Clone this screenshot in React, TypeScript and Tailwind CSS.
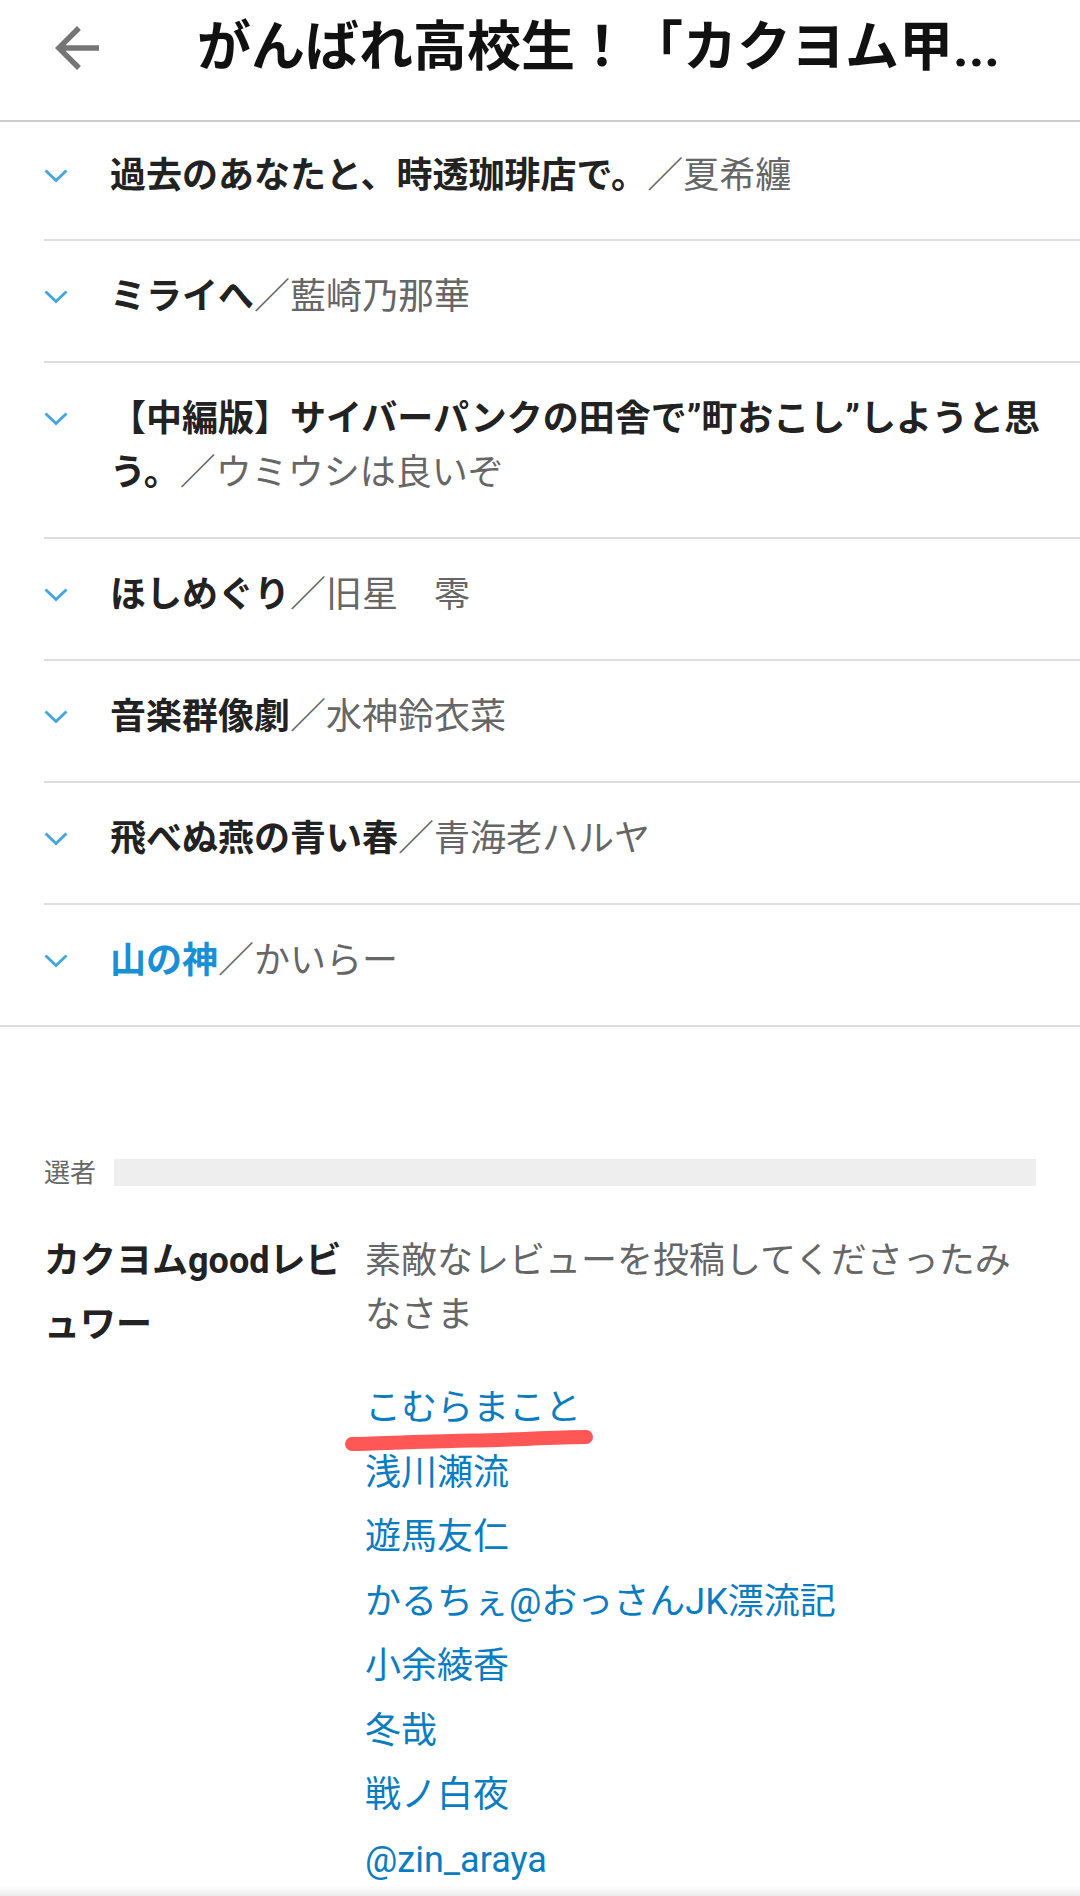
import React from 'react'

// works in the list; the last one is the highlighted (blue) title
const works = [
  { title: "過去のあなたと、時透珈琲店で。", author: "夏希纏" },
  { title: "ミライへ", author: "藍崎乃那華" },
  { title: "【中編版】サイバーパンクの田舎で”町おこし”しようと思う。", author: "ウミウシは良いぞ" },
  { title: "ほしめぐり", author: "旧星　零" },
  { title: "音楽群像劇", author: "水神鈴衣菜" },
  { title: "飛べぬ燕の青い春", author: "青海老ハルヤ" },
  { title: "山の神", author: "かいらー", link: true },
]

const reviewers = [
  "こむらまこと",
  "浅川瀬流",
  "遊馬友仁",
  "かるちぇ@おっさんJK漂流記",
  "小余綾香",
  "冬哉",
  "戦ノ白夜",
  "@zin_araya",
]

function Chevron() {
  return (
    <svg width="24" height="14" viewBox="0 0 24 14" fill="none">
      <polyline points="1.5,1.5 12,11.5 22.5,1.5" stroke="#47a6df" strokeWidth="3" />
    </svg>
  )
}

function BackArrow() {
  return (
    <svg width="66" height="66" viewBox="0 0 24 24" fill="#757575">
      <path d="M20 11H7.83l5.59-5.59L12 4l-8 8 8 8 1.41-1.41L7.83 13H20v-2z" />
    </svg>
  )
}

export default function App() {
  return (
    <div className="relative h-[1896px] overflow-hidden bg-white font-['Roboto','Noto_Sans_CJK_JP',sans-serif]">
      {/* header */}
      <header className="h-[122px] border-b-2 border-[#cccccc]">
        <div className="flex h-[96px] items-center">
          <div className="ml-[44px] flex w-[66px] flex-none items-center">
            <BackArrow />
          </div>
          <h1 className="ml-[87px] whitespace-nowrap text-[54px] font-bold leading-none text-[#111]">
            がんばれ高校生！「カクヨム甲...
          </h1>
        </div>
      </header>

      {/* works list */}
      <ul className="border-b-2 border-[#dddddd]">
        {works.map((w, i) => (
          <li key={i} className={"ml-[44px] " + (i < works.length - 1 ? "border-b-2 border-[#dddddd]" : "")}>
            <div className={"flex pr-[40px] " + (i === 0 ? "pt-[27px] pb-[36px]" : "pt-[29px] pb-[37px]")}>
              <div className="flex h-[54px] w-[66px] flex-none items-center">
                <Chevron />
              </div>
              <p className="text-[36px] leading-[54px]">
                <span className={w.link ? "font-bold text-[#1990d5]" : "font-bold text-[#222]"}>{w.title}</span>
                <span className="text-[#666]">／{w.author}</span>
              </p>
            </div>
          </li>
        ))}
      </ul>

      {/* judges */}
      <section className="mt-[132px] px-[44px]">
        <div className="flex h-[27px] items-center gap-[18px]">
          <span className="text-[26px] leading-none text-[#666]">選者</span>
          <div className="h-[27px] flex-1 bg-[#eeeeee]" />
        </div>

        <div className="mt-[43px] flex items-start">
          <div className="w-[321px] flex-none text-[36px] font-bold leading-[64px] text-[#222]">
            カクヨムgoodレビュワー
          </div>
          <div className="min-w-0 flex-1">
            <p className="mt-[5px] text-[36px] leading-[54px] text-[#666]">
              素敵なレビューを投稿してくださったみなさま
            </p>
            <ul className="mt-[34px] text-[36px] leading-[64.5px] text-[#0a7cc1]">
              {reviewers.map((r, i) => (
                <li key={i} className="relative">
                  {r}
                  {i === 0 && (
                    <svg className="absolute left-[-22px] top-[52px]" width="260" height="26" viewBox="0 0 260 26" fill="none">
                      <path d="M9 16 C 50 15, 90 13, 130 12.5 S 210 9, 243 9" stroke="#ff5656" strokeWidth="14" strokeLinecap="round" />
                    </svg>
                  )}
                </li>
              ))}
            </ul>
          </div>
        </div>
      </section>

      {/* shadow of the bottom bar */}
      <div className="absolute bottom-0 left-0 h-[10px] w-full bg-gradient-to-b from-transparent to-[#ececec]" />
    </div>
  )
}
